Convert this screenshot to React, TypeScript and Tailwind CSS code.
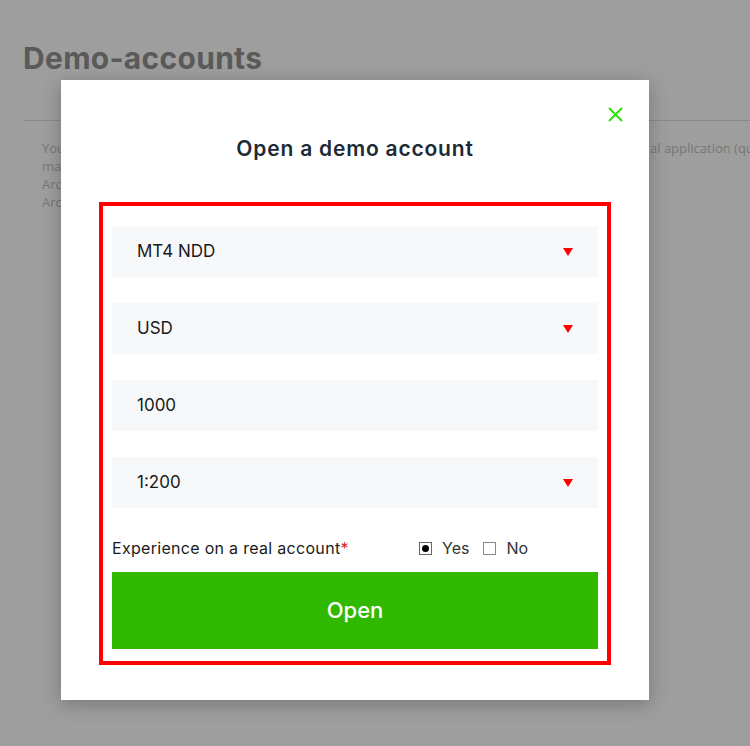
import { useState } from "react";

const fields = [
  { value: "MT4 NDD", select: true },
  { value: "USD", select: true },
  { value: "1000", select: false },
  { value: "1:200", select: true },
];

function Caret() {
  return (
    <svg width="10" height="8" viewBox="0 0 10 8" className="shrink-0">
      <path d="M0 0h10L5 8z" fill="#ff0000" />
    </svg>
  );
}

export default function App() {
  const [experience, setExperience] = useState<"yes" | "no">("yes");

  return (
    <div className="relative h-[746px] w-[750px] overflow-hidden bg-[#9e9e9e] font-['Open_Sans',sans-serif]">
      <div className="pt-[38px]">
        <h1 className="pl-[23px] font-['Inter',sans-serif] text-[30px] font-bold leading-[40px] tracking-[0.3px] text-[#5a5a5a]">
          Demo-accounts
        </h1>
        <div className="ml-[23px] mt-[42px] h-px bg-[#8a8a8a]" />
        <div className="pl-[42px] pt-[18px] text-[13px] leading-[18px] text-[#777]">
          <div className="flex whitespace-nowrap">
            <span className="w-[608px] shrink-0 overflow-hidden">You can open a demo</span>
            <span>al application (quick</span>
          </div>
          <div>margin trading</div>
          <div>Archive</div>
          <div>Archive</div>
        </div>
      </div>

      <div className="absolute left-[61px] top-[80px] h-[620px] w-[588px] bg-white shadow-[0_4px_18px_rgba(0,0,0,0.25)]">
        <button className="absolute right-[26px] top-[27px] p-0">
          <svg width="15" height="15" viewBox="0 0 15 15">
            <path d="M1 1l13 13M14 1L1 14" stroke="#2fe00a" strokeWidth="2" />
          </svg>
        </button>
        <h2 className="pt-[55px] text-center font-['Inter',sans-serif] text-[21px] font-semibold leading-[28px] tracking-[0.8px] text-[#1d2a35]">
          Open a demo account
        </h2>

        <div className="mx-[38px] mt-[39px] border-4 border-[#ff0000] px-[9px] pb-[12px] pt-[20px]">
          <div className="flex flex-col gap-[26px]">
            {fields.map((f) => (
              <div
                key={f.value}
                className="flex h-[51px] items-center justify-between bg-[#f7f8f9] pl-[25px] pr-[25px] font-['Inter',sans-serif] text-[17px] text-[#1a1a1a]"
              >
                <span>{f.value}</span>
                {f.select && <Caret />}
              </div>
            ))}
          </div>

          <div className="mt-[28px] flex items-center font-['Inter',sans-serif] text-[16px] text-[#1a1a1a]">
            <span className="w-[307px] tracking-[0.3px]">
              Experience on a real account<span className="text-[#e0201f]">*</span>
            </span>
            <label className="flex items-center" onClick={() => setExperience("yes")}>
              <span className="flex h-[13px] w-[13px] items-center justify-center border border-[#666] bg-white">
                {experience === "yes" && <span className="h-[7px] w-[7px] rounded-full bg-black" />}
              </span>
              <span className="ml-[10px] text-[#333]">Yes</span>
            </label>
            <label className="ml-[14px] flex items-center" onClick={() => setExperience("no")}>
              <span className="flex h-[13px] w-[13px] items-center justify-center border border-[#888] bg-white">
                {experience === "no" && <span className="h-[7px] w-[7px] rounded-full bg-black" />}
              </span>
              <span className="ml-[10px] text-[#333]">No</span>
            </label>
          </div>

          <button className="mt-[12px] flex h-[77px] w-full items-center justify-center bg-[#30b900] font-['Inter',sans-serif] text-[22px] font-medium text-white">
            Open
          </button>
        </div>
      </div>
    </div>
  );
}
